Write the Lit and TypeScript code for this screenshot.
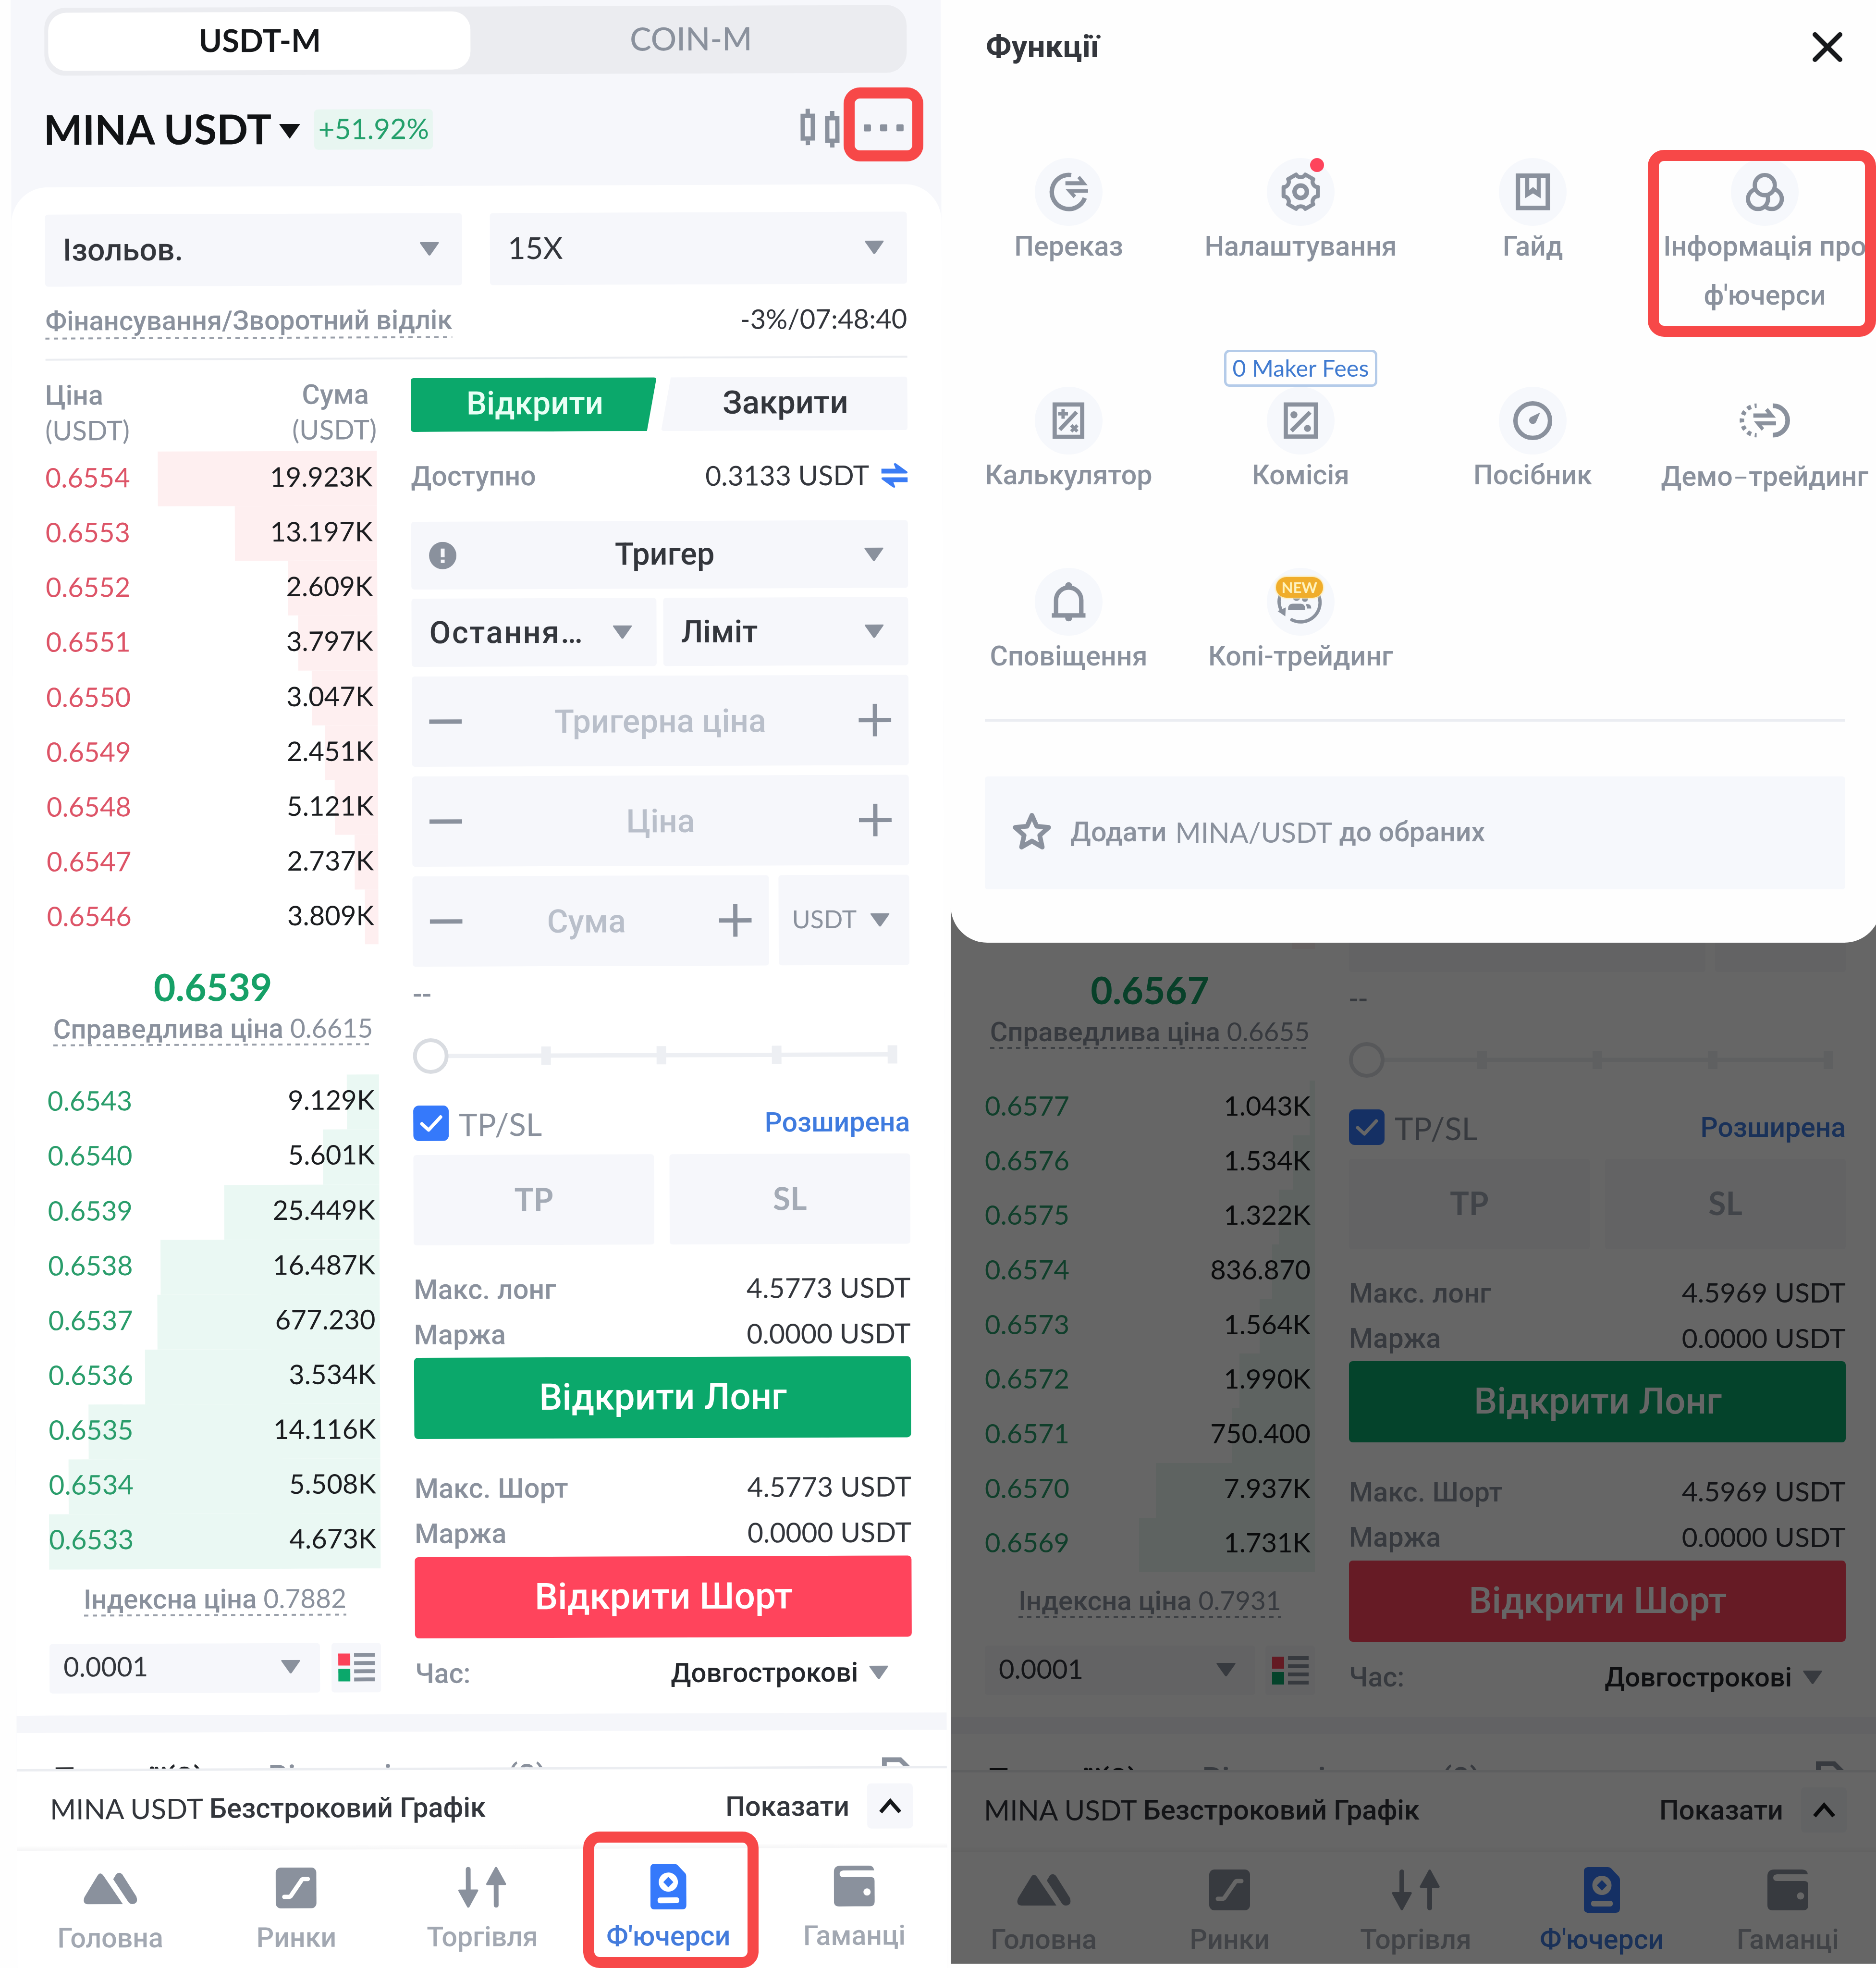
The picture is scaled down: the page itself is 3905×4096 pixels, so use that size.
import { LitElement, html, svg, css, nothing } from "lit";
import { customElement, property } from "lit/decorators.js";
import { classMap } from "lit/directives/class-map.js";

type Level = [price: string, amount: string, depth: number];

interface PhoneData {
  asks: Level[];
  bids: Level[];
  last: string;
  fair: string;
  index: string;
  max: string;
}

const FIRST: PhoneData = {
  asks: [
    ["0.6554", "19.923K", 456], ["0.6553", "13.197K", 296], ["0.6552", "2.609K", 186],
    ["0.6551", "3.797K", 165], ["0.6550", "3.047K", 137], ["0.6549", "2.451K", 110],
    ["0.6548", "5.121K", 90], ["0.6547", "2.737K", 49], ["0.6546", "3.809K", 28],
  ],
  bids: [
    ["0.6543", "9.129K", 67], ["0.6540", "5.601K", 117], ["0.6539", "25.449K", 323],
    ["0.6538", "16.487K", 456], ["0.6537", "677.230", 463], ["0.6536", "3.534K", 489],
    ["0.6535", "14.116K", 607], ["0.6534", "5.508K", 649], ["0.6533", "4.673K", 690],
  ],
  last: "0.6539",
  fair: "0.6615",
  index: "0.7882",
  max: "4.5773 USDT",
};

const SECOND: PhoneData = {
  asks: [],
  bids: [
    ["0.6577", "1.043K", 11], ["0.6576", "1.534K", 46], ["0.6575", "1.322K", 75],
    ["0.6574", "836.870", 89], ["0.6573", "1.564K", 115], ["0.6572", "1.990K", 157],
    ["0.6571", "750.400", 172], ["0.6570", "7.937K", 331], ["0.6569", "1.731K", 366],
  ],
  last: "0.6567",
  fair: "0.6655",
  index: "0.7931",
  max: "4.5969 USDT",
};

const shared = css`
  * { box-sizing: border-box; }
  :host { display: block; font-family: Lato, "Liberation Sans", sans-serif; color: #33363c; font-size: 56.2px; }
  svg { display: block; flex: none; }
  .cy { font-family: Roboto, "Liberation Sans", sans-serif; font-weight: 500; font-size: 57.3px; white-space: nowrap; }
  .num { white-space: nowrap; }
  .muted { color: #8a919d; }
  .row { display: flex; align-items: center; justify-content: space-between; }
  .dashed {
    padding-bottom: 4px;
    background: repeating-linear-gradient(90deg, #9aa0aa 0 9px, transparent 9px 18px) left bottom / 100% 4px no-repeat;
  }
`;

const caret = (color = "#8a919d") => svg`
  <svg width="40" height="28" viewBox="0 0 40 28"><path d="M2 0H38Q41 0 39 3L22 27Q20 29 18 27L1 3Q-1 0 2 0Z" fill=${color} /></svg>`;

const minus = html`<svg width="68" height="68" viewBox="0 0 68 68"><path d="M0 34H68" stroke="#8a919d" stroke-width="9" /></svg>`;
const plus = html`<svg width="68" height="68" viewBox="0 0 68 68"><path d="M0 34H68M34 0V68" stroke="#8a919d" stroke-width="9" /></svg>`;

@customElement("order-book")
class OrderBook extends LitElement {
  @property({ attribute: false }) data: PhoneData = FIRST;
  @property({ type: Boolean }) tail = false;

  static styles = [shared, css`
    :host { width: 690px; --pitch: 114.15px; }
    :host([tail]) { width: 687px; --pitch: 113.7px; }
    .head { display: flex; justify-content: space-between; height: 190px; padding: 37px 0 0 0; line-height: 72px; }
    .head .right { text-align: right; }
    .head .cy, .head .num { display: block; }
    .head .right .cy { padding-right: 16px; }
    .level { display: flex; justify-content: space-between; align-items: center; height: var(--pitch); padding: 0 9px 9px 0;
      background-repeat: no-repeat; background-position: right top; }
    .ask { background-image: linear-gradient(#feeff0, #feeff0); color: #dd5467; }
    .bid { background-image: linear-gradient(#eaf8f3, #eaf8f3); color: #2a9d6b; padding-bottom: 11px; }
    .level .num + .num { color: #1b1d20; }
    .stub { height: 13px; margin-left: auto; width: 47px; background: #fdf2f2; }
    .last { padding-top: 32px; text-align: center; font-size: 78.6px; font-weight: 700; line-height: 110px; height: 142px; color: #16a067; }
    .note { display: flex; justify-content: center; line-height: 62px; color: #8a919d; }
    .note .cy { white-space: pre; font-size: 56.3px; }
    .note .num { font-size: 55px; }
    .note.fair { margin-bottom: 61px; }
    .note.index { margin: 30px 0 57px; }
    .foot { display: flex; justify-content: space-between; height: 103px; }
    .step { width: 563px; padding: 0 41px 4px 29px; background: #f6f7fb; border-radius: 6px; }
    .step .num { padding-bottom: 5px; }
    .mode { width: 103px; background: #f6f7fb; border-radius: 6px; display: flex; justify-content: center; align-items: center; }
    :host([tail]) .last { padding-top: 30px; height: 140px; }
    :host([tail]) .note.fair { margin-bottom: 66px; }
    :host([tail]) .note.index { margin: 27px 0 58px; }
    :host([tail]) .step, :host([tail]) .mode { background: #f8f8fa; }
  `];

  private level(kind: string, [price, amount, depth]: Level) {
    return html`<div class="level ${kind}" style="background-size:${depth}px 100%">
      <span class="num">${price}</span><span class="num">${amount}</span></div>`;
  }

  render() {
    const d = this.data;
    return html`
      ${this.tail ? html`<div class="stub"></div>` : html`
        <div class="head muted">
          <div><span class="cy">Ціна</span><span class="num">(USDT)</span></div>
          <div class="right"><span class="cy">Сума</span><span class="num">(USDT)</span></div>
        </div>`}
      ${d.asks.map((l) => this.level("ask", l))}
      <div class="last">${d.last}</div>
      <div class="note fair"><div class="dashed"><span class="cy">Справедлива ціна </span><span class="num">${d.fair}</span></div></div>
      ${d.bids.map((l) => this.level("bid", l))}
      <div class="note index"><div class="dashed"><span class="cy">Індексна ціна </span><span class="num">${d.index}</span></div></div>
      <div class="foot">
        <div class="step row"><span class="num">0.0001</span>${caret()}</div>
        <div class="mode">
          <svg width="76" height="62" viewBox="0 0 76 62">
            <path d="M0 2H25V27H0Z" fill="#fb4259" /><path d="M0 34H25V60H0Z" fill="#0ba86b" />
            <path d="M33 5H76M33 22H76M33 39H76M33 56H76" stroke="#8a919d" stroke-width="8" />
          </svg>
        </div>
      </div>`;
  }
}

@customElement("order-form")
class OrderForm extends LitElement {
  @property() max = "";
  @property({ type: Boolean }) tail = false;

  static styles = [shared, css`
    :host { width: 1034px; }
    .big { font-size: 64.8px; }
    .tabs { display: flex; justify-content: space-between; height: 112px; margin-top: 39px; text-align: center; line-height: 107px; }
    .tabs .cy { font-size: 67px; }
    .open { width: 512px; padding-left: 5px; background: #0ba86b; color: #e9fff5; clip-path: polygon(0 0, 100% 0, 96% 100%, 0 100%); border-radius: 6px; }
    .close { width: 513px; padding-left: 5px; background: #f6f7fb; clip-path: polygon(4% 0, 100% 0, 100% 100%, 0 100%); border-radius: 6px; }
    .avail { height: 187px; }
    .avail .cy { padding-bottom: 2px; }
    .avail .num { display: flex; align-items: center; gap: 25px; font-size: 57px; padding-bottom: 3px; }
    .avail svg { margin-top: 3px; }
    .field { display: flex; align-items: center; background: #f6f7fb; border-radius: 6px; }
    .trigger { height: 141px; padding: 0 51px 0 37px; margin-bottom: 19px; }
    .trigger .cy { flex: 1; text-align: center; padding: 0 0 3px 18px; }
    .pair { display: flex; justify-content: space-between; height: 142px; margin-bottom: 20px; }
    .pair .field { width: 510px; justify-content: space-between; padding: 0 51px 0 37px; }
    .pair .cut { letter-spacing: 2.6px; }
    .stepper { height: 188px; margin-bottom: 20px; padding: 0 36px; justify-content: space-between; }
    .stepper .cy { font-size: 67.5px; color: #b9bfca; }
    .sum { display: flex; justify-content: space-between; height: 188px; }
    .sum .stepper { width: 742px; }
    .sum .stepper .cy { padding-right: 18px; }
    .unit { width: 272px; padding: 0 41px 0 28px; justify-content: space-between; font-size: 51.8px; color: #8a919d; }
    .unit .num { padding-bottom: 6px; }
    .empty { height: 118px; line-height: 116px; color: #8a919d; }
    .slider { height: 136px; display: flex; align-items: center; }
    .check { height: 138px; padding-top: 6px; }
    .check .left { display: flex; align-items: center; gap: 21px; font-size: 65.2px; color: #8a919d; }
    .check .left .num { padding-top: 4px; }
    .check .cy { color: #3f7bdf; font-size: 57px; }
    .boxes { display: flex; justify-content: space-between; height: 188px; }
    .boxes .field { width: 501px; justify-content: center; font-size: 66px; font-weight: 700; color: #a4abb6; padding-bottom: 6px; }
    .info { height: 234px; padding-top: 45px; }
    .info .row { height: 94.5px; }
    .info.second { height: 246px; padding-top: 56px; }
    .info .num { font-size: 57px; padding-bottom: 4px; }
    .info .muted { letter-spacing: 0.2px; }
    .btn { height: 169px; border-radius: 8px; line-height: 167px; text-align: center; color: #fff; }
    .btn .cy { font-size: 76.2px; padding-left: 2px; }
    .long { background: #0ba86b; }
    .short { background: #ff445c; }
    .time { height: 147px; }
    .time .pick { display: flex; align-items: center; gap: 23px; padding-right: 49px; color: #24272c; font-size: 56.2px; }
    :host([tail]) .field { background: #f8f8fa; }
    :host([tail]) .sum { height: 61px; }
    :host([tail]) .sum .field { height: 61px; border-radius: 0 0 6px 6px; }
    :host([tail]) .empty { height: 115px; line-height: 113px; }
    :host([tail]) .info:not(.second) { height: 233px; padding-top: 44px; }
  `];

  private full() {
    return html`
      <div class="tabs">
        <div class="open"><span class="cy">Відкрити</span></div>
        <div class="close"><span class="cy">Закрити</span></div>
      </div>
      <div class="avail row">
        <span class="cy muted">Доступно</span>
        <span class="num">0.3133 USDT
          <svg width="55" height="52" viewBox="0 0 55 52" fill="#3b7cf5">
            <path d="M0 12H30L26 2Q28 -1 32 2L54 18Q56 22 52 22H0Z" />
            <path d="M55 40H25L29 50Q27 53 23 50L1 34Q-1 30 3 30H55Z" />
          </svg>
        </span>
      </div>
      <div class="field trigger">
        <svg width="57" height="57" viewBox="0 0 57 57"><circle cx="28.500" cy="28.500" r="28.500" fill="#8a919d" />
          <path d="M28.500 14V32" stroke="#f6f7fb" stroke-width="8" /><path d="M28.500 37V44" stroke="#f6f7fb" stroke-width="8" /></svg>
        <span class="cy big">Тригер</span>${caret()}
      </div>
      <div class="pair">
        <div class="field"><span class="cy big cut">Остання…</span>${caret()}</div>
        <div class="field"><span class="cy big">Ліміт</span>${caret()}</div>
      </div>
      <div class="field stepper">${minus}<span class="cy">Тригерна ціна</span>${plus}</div>
      <div class="field stepper">${minus}<span class="cy">Ціна</span>${plus}</div>`;
  }

  private info(cls: string, label: string) {
    return html`<div class="info ${cls}">
      <div class="row"><span class="cy muted">${label}</span><span class="num">${this.max}</span></div>
      <div class="row"><span class="cy muted">Маржа</span><span class="num">0.0000 USDT</span></div>
    </div>`;
  }

  render() {
    return html`
      ${this.tail ? nothing : this.full()}
      <div class="sum">
        <div class="field stepper">${this.tail ? nothing : html`${minus}<span class="cy">Сума</span>${plus}`}</div>
        <div class="field unit">${this.tail ? nothing : html`<span class="num">USDT</span>${caret()}`}</div>
      </div>
      <div class="empty cy">--</div>
      <div class="slider">
        <svg width="1034" height="74" viewBox="0 0 1034 74">
          <path d="M72 37H1000" stroke="#edeff3" stroke-width="9" />
          <path d="M277 18V56M517 18V56M757 18V56M998 18V56" stroke="#edeff3" stroke-width="20" />
          <circle cx="37" cy="37" r="33" fill="#fff" stroke="#d9dce1" stroke-width="8" />
        </svg>
      </div>
      <div class="check row">
        <div class="left">
          <svg width="74" height="74" viewBox="0 0 74 74"><rect width="74" height="74" rx="12" fill="#3579fb" />
            <path d="M18 38L32 51L57 24" fill="none" stroke="#fff" stroke-width="7" stroke-linecap="round" stroke-linejoin="round" /></svg>
          <span class="num">TP/SL</span>
        </div>
        <span class="cy">Розширена</span>
      </div>
      <div class="boxes"><div class="field">TP</div><div class="field">SL</div></div>
      ${this.info("", "Макс. лонг")}
      <div class="btn long"><span class="cy">Відкрити Лонг</span></div>
      ${this.info("second", "Макс. Шорт")}
      <div class="btn short"><span class="cy">Відкрити Шорт</span></div>
      <div class="time row"><span class="cy muted">Час:</span><span class="cy pick">Довгострокові ${caret()}</span></div>`;
  }
}

const NAV = [
  { label: "Головна", icon: svg`<svg width="112" height="66" viewBox="0 0 112 66" fill="#8a919d">
      <path d="M29 7Q35 -3 42 7L82 66H9Q-3 65 2 51Z" /><path d="M62 14L68 4Q74 -3 81 4L110 50Q115 65 102 66Q96 66 93 61Z" /></svg>` },
  { label: "Ринки", icon: svg`<svg width="85" height="85" viewBox="0 0 85 85"><rect width="85" height="85" rx="11" fill="#8a919d" />
      <path d="M67 24H58Q55 24 53 28L33 57Q31 61 27 61H18" fill="none" stroke="#fff" stroke-width="9" stroke-linecap="round" /></svg>` },
  { label: "Торгівля", icon: svg`<svg width="100" height="85" viewBox="0 0 100 85" fill="#8a919d">
      <path d="M21 5V60M79 80V20" stroke="#8a919d" stroke-width="10" stroke-linecap="round" />
      <path d="M2 47H40Q43 48 41 51L23 84Q21 86 19 84L1 51Q-1 48 2 47ZM60 38H98Q101 37 99 34L81 1Q79 -1 77 1L59 34Q57 37 60 38Z" /></svg>` },
  { label: "Ф'ючерси", icon: svg`<svg width="75" height="95" viewBox="0 0 75 95"><path d="M9 0H50Q54 0 57 3L73 20Q75 23 75 26V86Q75 95 66 95H9Q0 95 0 86V9Q0 0 9 0Z" fill="#3579fb" />
      <circle cx="37.500" cy="38" r="20" fill="#fff" /><path d="M37.500 27L48 38L37.500 49L27 38Z" fill="#3579fb" /><rect x="15" y="70" width="45" height="12" rx="5" fill="#fff" /></svg>` },
  { label: "Гаманці", icon: svg`<svg width="85" height="85" viewBox="0 0 85 85"><path d="M14 0H72Q83 0 84 10H20Q12 11 12 17Q12 24 20 24H77Q85 24 85 32V74Q85 85 74 85H11Q0 85 0 74V14Q0 0 14 0Z" fill="#8a919d" />
      <circle cx="69" cy="55" r="7.500" fill="#fff" /></svg>` },
];

@customElement("phone-footer")
class PhoneFooter extends LitElement {
  static styles = [shared, css`
    .band { height: 36px; background: #f5f6fa; }
    .peek { display: flex; height: 75px; overflow: hidden; padding: 53px 71px 0 76px; line-height: 80px; }
    .peek .cy { font-size: 65.5px; }
    .peek .first { width: 447px; padding-top: 3px; color: #1d2024; font-size: 66.5px; }
    .peek svg { margin: 3px 0 0 auto; }
    .line { height: 5px; background: #ebedf1; }
    .chart { height: 156px; padding: 0 71px 0 69px; }
    .chart .cy { font-size: 57.6px; }
    .name { display: flex; align-items: center; gap: 13px; }
    .name .num { font-size: 58.3px; padding-bottom: 3px; }
    .show { display: flex; align-items: center; gap: 37px; }
    .chev { width: 95px; height: 94px; background: #f6f7fb; border-radius: 8px; display: flex; align-items: center; justify-content: center; }
    .shade { height: 9px; background: linear-gradient(#fdfdfd, #f5f5f6); }
    .nav { display: grid; grid-template-columns: repeat(5, 1fr); padding-top: 31px; }
    .item { display: flex; flex-direction: column; align-items: center; gap: 16px; color: #a2a8b2; line-height: 80px; }
    .item.on { color: #437bdc; }
    .glyph { height: 96px; display: flex; align-items: center; }
  `];

  render() {
    return html`
      <div class="band"></div>
      <div class="peek">
        <span class="cy first">Позиції(0)</span><span class="cy muted">Відкриті ордери(0)</span>
        <svg width="64" height="40" viewBox="0 0 64 40"><path d="M5 40V6H38L60 28" fill="none" stroke="#8a919d" stroke-width="10" /></svg>
      </div>
      <div class="line"></div>
      <div class="chart row">
        <div class="name"><span class="num">MINA USDT</span><span class="cy">Безстроковий Графік</span></div>
        <div class="show"><span class="cy">Показати</span>
          <div class="chev"><svg width="48" height="34" viewBox="0 0 48 34"><path d="M4 30L24 7L44 30" fill="none" stroke="#15171a" stroke-width="8" /></svg></div>
        </div>
      </div>
      <div class="shade"></div>
      <div class="nav">
        ${NAV.map((n, i) => html`<div class=${classMap({ item: true, on: i === 3 })}><div class="glyph">${n.icon}</div><span class="cy">${n.label}</span></div>`)}
      </div>`;
  }
}

const polar = (cx: number, cy: number, r: number, deg: number) => {
  const a = (deg * Math.PI) / 180;
  return `${(cx + r * Math.cos(a)).toFixed(1)} ${(cy + r * Math.sin(a)).toFixed(1)}`;
};
const gearPath = Array.from({ length: 6 }, (_, i) => {
  const a = i * 60;
  return `${i ? "L" : "M"}${polar(145, 144, 76, a - 15)}L${polar(145, 144, 76, a + 15)}A23 23 0 0 0 ${polar(145, 144, 76, a + 45)}`;
}).join("") + "Z";
const starPath = "M" + Array.from({ length: 10 }, (_, i) => polar(82, 87, i % 2 ? 35 : 75, -90 + i * 36)).join("L") + "Z";

const G = "#8a919d";
const TOOLS = [
  { label: "Переказ", icon: svg`<g transform="translate(-152 -60)"><path d="M308 133A73 73 0 1 0 366 231" fill="none" stroke=${G} stroke-width="19" />
      <path d="M283 159H345L334 146L345 136L378 176H283ZM380 193V208H318L329 220L318 231L284 193Z" fill=${G} /></g>` },
  { label: "Налаштування", dot: true, icon: svg`<path d=${gearPath} fill="none" stroke=${G} stroke-width="17" stroke-linejoin="round" />
      <circle cx="145" cy="144" r="26.500" fill="none" stroke=${G} stroke-width="19" />` },
  { label: "Гайд", icon: svg`<g transform="translate(-81 -62)"><path d="M162.500 137.500H290.500V275.500H162.500Z" fill="none" stroke=${G} stroke-width="19" />
      <path d="M193 137H211V199L227 186L243 199V137H260V234L227 213L193 234Z" fill=${G} /></g>` },
  { label: "Інформація про ф'ючерси", icon: svg`<g transform="translate(-1077 -62)" fill="#f6f8fc" stroke=${G} stroke-width="18">
      <circle cx="1252" cy="237" r="43" /><circle cx="1193" cy="237" r="43" /><circle cx="1222" cy="178" r="43" /></g>` },
  { label: "Калькулятор", icon: svg`<g transform="translate(-152 -1041)" fill="none" stroke=${G} stroke-width="18"><path d="M237 1117H355V1255H237Z" />
      <path d="M259 1225L331 1149" stroke-width="17" /><path d="M273 1136V1178M252 1157H294M308 1206L334 1232M334 1206L308 1232" stroke-width="14" /></g>` },
  { label: "Комісія", tag: "0 Maker Fees", icon: svg`<g transform="translate(-1147 -1043)" fill="none" stroke=${G} stroke-width="18"><path d="M1228 1119H1357V1256H1228Z" />
      <path d="M1252 1232L1332 1152" /><circle cx="1263" cy="1163" r="15" fill=${G} stroke="none" /><circle cx="1321" cy="1221" r="15" fill=${G} stroke="none" /></g>` },
  { label: "Посібник", icon: svg`<g transform="translate(-80 -1043)"><circle cx="225" cy="1188" r="74" fill="none" stroke=${G} stroke-width="19" />
      <path d="M257 1153L241 1190A16 16 0 1 1 218 1172Z" fill=${G} /></g>` },
  { label: html`Демо<span class="dash">–</span>трейдинг`, bare: true, icon: svg`<g transform="translate(-1077 -1040)"><path d="M1256 1121A64 63 0 0 1 1256 1247" fill="none" stroke=${G} stroke-width="20" />
      <path d="M1187 1121A63 63 0 0 0 1187 1247" fill="none" stroke=${G} stroke-width="19" stroke-dasharray="17 16" stroke-dashoffset="8.500" />
      <path d="M1173 1154H1233L1223 1142L1235 1131L1269 1172H1173ZM1270 1188V1205H1209L1219 1217L1209 1228L1176 1188Z" fill=${G} /></g>` },
  { label: "Сповіщення", icon: svg`<g transform="translate(-150 -162)"><path d="M241 364V300A54 54 0 0 1 349 300V364" fill="none" stroke=${G} stroke-width="19" />
      <path d="M223 365.500H367" stroke=${G} stroke-width="19" /><circle cx="295" cy="238" r="15" fill=${G} /><circle cx="295" cy="376" r="15" fill=${G} /></g>` },
  { label: "Копі-трейдинг", fresh: true, icon: svg`<g transform="translate(-1147 -162)"><path d="M1208 270A83 83 0 0 0 1207 340M1367 275A83 83 0 0 1 1254 384" fill="none" stroke=${G} stroke-width="14" stroke-linecap="round" />
      <path d="M1193 347L1228 331L1226 369ZM1238 343V334Q1240 315 1258 315H1292Q1310 316 1311 334V343ZM1314 317H1322Q1337 318 1337 336H1320Z" fill=${G} />
      <circle cx="1274" cy="286" r="17" fill=${G} /><circle cx="1310" cy="294" r="13" fill=${G} /></g>` },
] as { label: unknown; icon: unknown; dot?: boolean; tag?: string; bare?: boolean; fresh?: boolean }[];

@customElement("tools-sheet")
class ToolsSheet extends LitElement {
  static styles = [shared, css`
    :host { height: 1962px; width: 1936px; background: #fefefe; border-radius: 0 0 76px 76px; overflow: hidden; }
    .top { height: 196px; padding: 0 80px 0 73px; }
    .top .cy { font-size: 65.6px; font-weight: 700; padding-bottom: 3px; }
    .grid { display: grid; grid-template-columns: repeat(4, 483px); row-gap: 140px; padding: 133px 0 0 4px; }
    .tile { display: flex; flex-direction: column; align-items: center; }
    .disc { position: relative; width: 141px; height: 141px; border-radius: 50%; background: #f6f8fc; }
    .disc.bare { background: none; }
    .label { width: 440px; margin: -8px 0 -1px; line-height: 102px; text-align: center; }
    .label.cy { white-space: normal; font-size: 57.4px; }
    .dash { font-family: Lato, "Liberation Sans", sans-serif; font-weight: 400; }
    .dot { position: absolute; left: 90px; top: 0; width: 29px; height: 29px; border-radius: 50%; background: #fe445c; }
    .tag { position: absolute; left: -89px; top: -77px; width: 319px; height: 77px; border: 5px solid #b4cbe9; border-radius: 11px;
      line-height: 64px; text-align: center; font-size: 48.4px; color: #3f7ad0; white-space: nowrap; background: #fefefe; }
    .new { position: absolute; left: 19px; top: 19px; width: 98px; height: 43px; border-radius: 22px; background: #f0ad2b; box-shadow: 0 0 3px 2px #fdeab0;
      color: #fff2bd; font: 700 31px/43px Lato, sans-serif; text-align: center; }
    .rule { height: 5px; margin: 81px 74px 114px 71px; background: #ebedf2; }
    .fav { display: flex; align-items: center; height: 235px; margin: 0 74px 0 71px; padding: 0 0 5px 58px; background: #f6f8fc; border-radius: 6px; }
    .fav svg { margin-right: 40px; }
    .fav .mid { font-size: 57.4px; margin: 0 14px 0 18px; }
  `];

  render() {
    return html`
      <div class="top row"><span class="cy">Функції</span>
        <svg width="62" height="62" viewBox="0 0 62 62"><path d="M5 5L57 57M57 5L5 57" stroke="#17191c" stroke-width="10" stroke-linecap="round" /></svg>
      </div>
      <div class="grid">
        ${TOOLS.map((t) => html`<div class="tile">
          <div class=${classMap({ disc: true, bare: !!t.bare })}>
            <svg width="141" height="141" viewBox="0 0 290 290">${t.icon}</svg>
            ${t.dot ? html`<i class="dot"></i>` : nothing}
            ${t.tag ? html`<span class="tag">${t.tag}</span>` : nothing}
            ${t.fresh ? html`<span class="new">NEW</span>` : nothing}
          </div>
          <span class="label cy muted">${t.label}</span>
        </div>`)}
      </div>
      <div class="rule"></div>
      <div class="fav muted">
        <svg width="80" height="80" viewBox="0 0 164 164"><path d=${starPath} fill="none" stroke=${G} stroke-width="20" stroke-linejoin="round" /></svg>
        <span class="cy">Додати</span><span class="num mid">MINA/USDT</span><span class="cy">до обраних</span>
      </div>`;
  }
}

@customElement("app-root")
class AppRoot extends LitElement {
  static styles = [shared, css`
    :host { position: relative; display: flex; width: 3905px; height: 4096px; overflow: hidden; background: #fefefe; }
    .left { flex: none; width: 1979px; transform: rotate(-0.2deg); transform-origin: 0 0; }
    .phone { width: 1936px; margin-left: 22px; background: #f6f7fb; }
    .seg { display: flex; width: 1795px; height: 141px; padding: 10px 8px; background: #ebecf0; border-radius: 42px; font-size: 66.8px; text-align: center; line-height: 115px; }
    .seg div { flex: 1; padding-left: 18px; color: #8a919d; font-weight: 500; }
    .seg .on { flex: none; width: 879px; height: 121px; padding-left: 2px; background: #fff; border-radius: 38px; color: #15171a; font-size: 65.5px; font-weight: 700; }
    .header { padding: 17px 0 0 70px; height: 390px; }
    .pair { display: flex; align-items: center; height: 228px; padding-right: 78px; }
    .pair .title { font-size: 85.6px; font-weight: 700; color: #111315; margin: 0 16px 7px -2px; white-space: nowrap; }
    .pair .drop { margin-top: 6px; }
    .change { margin-left: 29px; width: 247px; height: 84px; line-height: 79px; background: #e8f6f1; border-radius: 8px; color: #23a06b; font-size: 58.5px; text-align: center; }
    .tools { display: flex; align-items: center; gap: 50px; margin-left: auto; }
    .card { background: #fff; border-radius: 76px 76px 0 0; padding: 57px 72px 0 70px; height: 3181px; }
    .selects { display: flex; justify-content: space-between; height: 150px; }
    .select { width: 868px; padding: 0 48px 3px 37px; background: #f6f7fb; border-radius: 6px; }
    .select .cy { font-size: 64.4px; }
    .select .num { font-size: 63.5px; padding-bottom: 4px; }
    .fund { height: 150px; padding: 38px 0 0; align-items: flex-start; line-height: 68px; }
    .fund .cy { font-size: 56.2px; }
    .rule { height: 4px; background: #ebedf1; }
    .cols { display: flex; justify-content: space-between; margin-left: -1px; }
    phone-footer { background: #fff; padding-bottom: 30px; }

    .right { position: relative; flex: none; width: 1936px; height: 4087px; overflow: hidden; background: #fff; }
    .under { display: flex; justify-content: space-between; height: 3573px; padding: 1962px 73px 0 71px; }
    .veil { position: absolute; inset: 0; background: rgba(0, 0, 0, 0.6); }
    tools-sheet { position: absolute; left: 0; top: 0; }

    .mark { position: absolute; border: 23px solid #f74848; border-radius: 34px; }
    .mark.menu { left: 1756px; top: 182px; width: 166px; height: 154px; }
    .mark.tab { left: 1214px; top: 3812px; width: 365px; height: 284px; }
    .mark.tile { left: 3430px; top: 312px; width: 475px; height: 389px; }
  `];

  render() {
    return html`
      <div class="left"><div class="phone">
        <div class="header">
          <div class="seg"><div class="on">USDT-M</div><div>COIN-M</div></div>
          <div class="pair">
            <span class="title">MINA USDT</span>
            <svg class="drop" width="44" height="31" viewBox="0 0 40 28"><path d="M0 0H40L20 28Z" fill="#111315" /></svg>
            <span class="change">+51.92%</span>
            <div class="tools">
              <svg width="82" height="81" viewBox="0 0 82 81" fill="none" stroke="#8a919d" stroke-width="9">
                <path d="M5 15H26V62H5ZM15.500 0V15M15.500 62V76" /><path d="M56 20H77V67H56ZM66.500 5V20M66.500 67V81" />
              </svg>
              <svg width="83" height="15" viewBox="0 0 83 15" fill="#8a919d"><rect width="15" height="15" rx="3" /><rect x="34" width="15" height="15" rx="3" /><rect x="68" width="15" height="15" rx="3" /></svg>
            </div>
          </div>
        </div>
        <div class="card">
          <div class="selects">
            <div class="select row"><span class="cy">Ізольов.</span>${caret()}</div>
            <div class="select row"><span class="num">15X</span>${caret()}</div>
          </div>
          <div class="fund row"><span class="cy muted dashed">Фінансування/Зворотний відлік</span><span class="num">-3%/07:48:40</span></div>
          <div class="rule"></div>
          <div class="cols">
            <order-book .data=${FIRST}></order-book>
            <order-form max=${FIRST.max}></order-form>
          </div>
        </div>
        <phone-footer></phone-footer>
      </div></div>

      <div class="right">
        <div class="under">
          <order-book tail .data=${SECOND}></order-book>
          <order-form tail max=${SECOND.max}></order-form>
        </div>
        <phone-footer></phone-footer>
        <div class="veil"></div>
        <tools-sheet></tools-sheet>
      </div>

      <div class="mark menu"></div>
      <div class="mark tab"></div>
      <div class="mark tile"></div>`;
  }
}
